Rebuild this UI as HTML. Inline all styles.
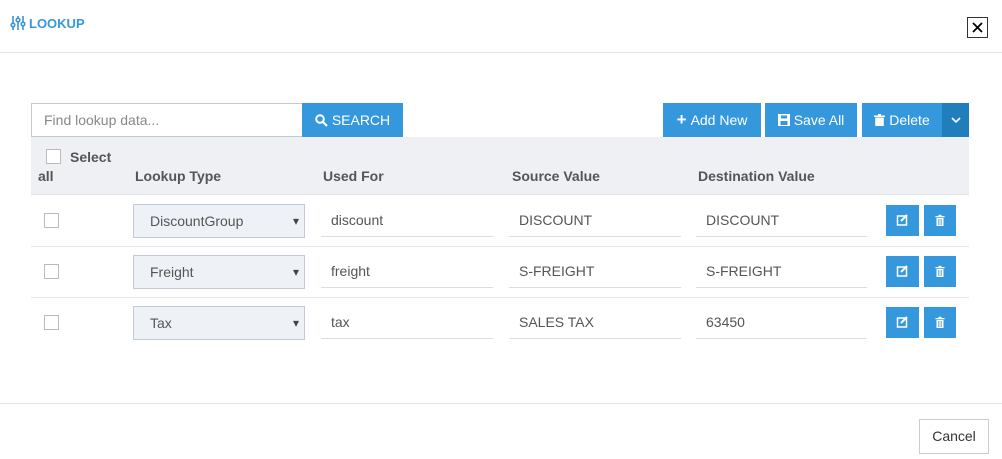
<!DOCTYPE html><html><head><style>
*{box-sizing:border-box;margin:0;padding:0}
body{width:1002px;height:459px;background:#fff;font-family:"Liberation Sans",sans-serif;font-size:14px;color:#555;position:relative;overflow:hidden}
.a{position:absolute}
.btn{position:absolute;background:#3598dc;color:#fff;font-size:14px;display:flex;align-items:center;justify-content:center;gap:4px}
.cb{position:absolute;width:15px;height:15px;border:1px solid #bbb;background:#fff}
.sel{position:absolute;left:133px;width:172px;height:34px;background:#eef1f5;border:1px solid #c2cad8;padding:0 0 0 16px;line-height:32px;color:#555}
.sel:after{content:"▾";position:absolute;right:5px;top:0;font-size:12px;color:#444}
.in{position:absolute;height:34px;border-bottom:1px solid #ddd;line-height:34px;padding-left:10px;color:#555}
.th{position:absolute;font-weight:bold;color:#555;top:168px}
</style></head><body>
<div class="a" style="left:10px;top:15px;color:#3598dc;font-weight:bold;font-size:13px;display:flex;align-items:center;gap:3px">
<svg width="16" height="16" viewBox="0 0 16 16" stroke="#3598dc" stroke-width="1.6" fill="none"><path d="M3 1v14M8 1v14M13 1v14"/><circle cx="3" cy="10" r="1.8" fill="#fff"/><circle cx="8" cy="5" r="1.8" fill="#fff"/><circle cx="13" cy="9" r="1.8" fill="#fff"/></svg>LOOKUP</div>
<div class="a" style="left:967px;top:17px;width:21px;height:21px;border:1px solid #333"><svg width="19" height="19" viewBox="0 0 19 19"><path d="M5 5l9 9M14 5l-9 9" stroke="#000" stroke-width="1.8"/></svg></div>
<div class="a" style="left:0;top:52px;width:1002px;height:1px;background:#e5e5e5"></div>
<div class="a" style="left:31px;top:103px;width:272px;height:34px;border:1px solid #c2cad8;padding-left:12px;line-height:32px;color:#888">Find lookup data...</div>
<div class="btn" style="left:302px;top:103px;width:101px;height:34px">
<svg width="13" height="13" viewBox="0 0 13 13" stroke="#fff" stroke-width="2" fill="none"><circle cx="5" cy="5" r="3.8"/><path d="M8 8l4 4"/></svg>SEARCH</div>
<div class="btn" style="left:663px;top:103px;width:98px;height:34px"><b style="font-size:17px">+</b>Add New</div>
<div class="btn" style="left:765px;top:103px;width:92px;height:34px">
<svg width="12" height="12" viewBox="0 0 12 12"><rect x="0" y="0" width="12" height="12" fill="#fff"/><rect x="3" y="1.5" width="6" height="3" fill="#3598dc"/><rect x="2.5" y="7" width="7" height="4" fill="#3598dc"/></svg>Save All</div>
<div class="btn" style="left:862px;top:103px;width:80px;height:34px">
<svg width="11" height="12" viewBox="0 0 11 12"><rect x="0" y="1.5" width="11" height="1.5" fill="#fff"/><rect x="4" y="0" width="3" height="2" fill="#fff"/><rect x="1.2" y="3.5" width="8.6" height="8.5" fill="#fff"/></svg>Delete</div>
<div class="btn" style="left:942px;top:103px;width:27px;height:34px;background:#217ebd"><svg width="10" height="6" viewBox="0 0 10 6"><path d="M1 1l4 4 4-4" stroke="#fff" stroke-width="1.6" fill="none"/></svg></div>
<div class="a" style="left:31px;top:137px;width:938px;height:58px;background:#eef0f4;border-bottom:1px solid #e2e5ea"></div>
<div class="cb" style="left:46px;top:149px"></div>
<div class="th" style="left:70px;top:149px">Select</div>
<div class="th" style="left:38px">all</div>
<div class="th" style="left:135px">Lookup Type</div>
<div class="th" style="left:323px">Used For</div>
<div class="th" style="left:512px">Source Value</div>
<div class="th" style="left:698px">Destination Value</div>

<div class="a" style="left:31px;top:246px;width:938px;height:1px;background:#e5e5e5"></div>
<div class="a" style="left:31px;top:297px;width:938px;height:1px;background:#e5e5e5"></div>

<div class="cb" style="left:44px;top:213px"></div>
<div class="sel" style="top:204px">DiscountGroup</div>
<div class="in" style="left:321px;top:203px;width:172px">discount</div>
<div class="in" style="left:509px;top:203px;width:172px">DISCOUNT</div>
<div class="in" style="left:696px;top:203px;width:171px">DISCOUNT</div>

<div class="cb" style="left:44px;top:264px"></div>
<div class="sel" style="top:255px">Freight</div>
<div class="in" style="left:321px;top:254px;width:172px">freight</div>
<div class="in" style="left:509px;top:254px;width:172px">S-FREIGHT</div>
<div class="in" style="left:696px;top:254px;width:171px">S-FREIGHT</div>

<div class="cb" style="left:44px;top:315px"></div>
<div class="sel" style="top:306px">Tax</div>
<div class="in" style="left:321px;top:305px;width:172px">tax</div>
<div class="in" style="left:509px;top:305px;width:172px">SALES TAX</div>
<div class="in" style="left:696px;top:305px;width:171px">63450</div>

<svg class="a" style="left:0;top:0" width="1002" height="459">
<defs>
<g id="e"><rect width="33" height="31" fill="#3598dc"/><rect x="11.5" y="11" width="9" height="9" fill="none" stroke="#fff" stroke-width="1.5"/><path d="M15 16l6-6" stroke="#fff" stroke-width="2"/></g>
<g id="t"><rect width="32" height="31" fill="#3598dc"/><rect x="11.5" y="11" width="9" height="1.3" fill="#fff"/><rect x="14.5" y="9.8" width="3" height="1.5" fill="#fff"/><rect x="12.5" y="13" width="7" height="8" fill="#fff"/><path d="M14.5 14v6M16 14v6M17.5 14v6" stroke="#3598dc" stroke-width=".6"/></g>
</defs>
<use href="#e" x="886" y="205"/><use href="#t" x="924" y="205"/>
<use href="#e" x="886" y="256"/><use href="#t" x="924" y="256"/>
<use href="#e" x="886" y="307"/><use href="#t" x="924" y="307"/>
</svg>

<div class="a" style="left:0;top:403px;width:1002px;height:1px;background:#e5e5e5"></div>
<div class="a" style="left:919px;top:419px;width:70px;height:35px;border:1px solid #ccc;text-align:center;line-height:33px;color:#333">Cancel</div>
</body></html>
